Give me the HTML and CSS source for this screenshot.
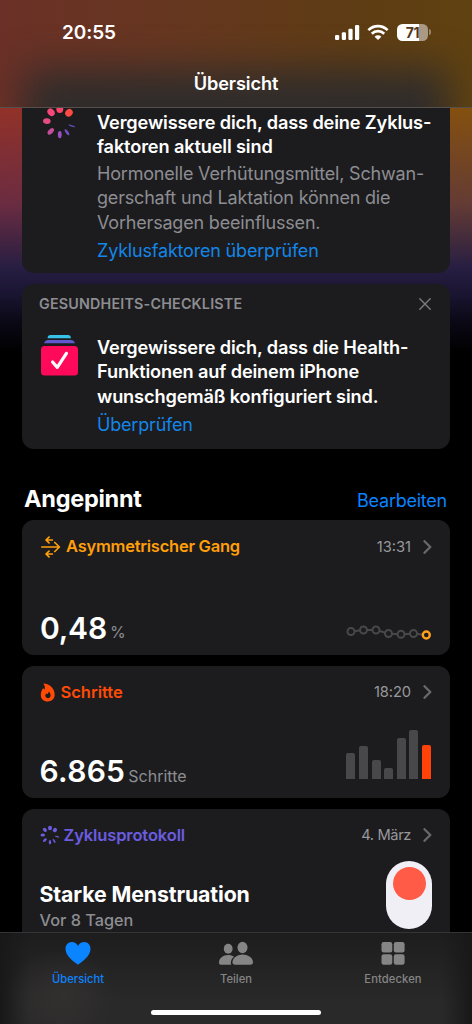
FILE: index.html
```html
<!DOCTYPE html>
<html lang="de">
<head>
<meta charset="utf-8">
<title>Übersicht</title>
<link rel="stylesheet" href="styles.css">
</head>
<body>
<div class="phone">
  <header class="header">
    <div class="status">
      <span class="clock">20:55</span>
      <div class="status-icons">
        <svg width="25" height="17" viewBox="0 0 25 17" fill="#fff"><rect x="0" y="11" width="4.2" height="5" rx="1.2"/><rect x="6.8" y="8.3" width="4.2" height="7.7" rx="1.2"/><rect x="13.4" y="4.7" width="4.2" height="11.3" rx="1.2"/><rect x="20" y="1" width="4.2" height="15" rx="1.2"/></svg>
        <svg class="wifi" width="22" height="17" viewBox="0 0 22 17" fill="none" stroke="#fff" stroke-width="2.7"><path d="M1.4 6.1a13.6 13.6 0 0 1 19.2 0"/><path d="M4.8 9.7a8.8 8.8 0 0 1 12.4 0"/><path d="M11 16l-3.4-3.3a4.8 4.8 0 0 1 6.8 0z" fill="#fff" stroke="none"/></svg>
        <div class="battery"><span class="battery-level">71</span></div><i class="battery-cap"></i>
      </div>
    </div>
    <h1 class="title">Übersicht</h1>
  </header>

  <main class="content">
    <section class="card notice cycle">
      <svg class="notice-icon" width="40" height="40" viewBox="-20.8 -20 40 40">
        <ellipse cx="0" cy="-12.7" rx="3.4" ry="3.6" fill="#fa4569"/>
        <ellipse cx="0" cy="-13" rx="3.5" ry="4" fill="#ff4944" transform="rotate(45)"/>
        <ellipse cx="0" cy="-12.6" rx=".7" ry="3.5" fill="#6550c8" transform="rotate(108)"/>
        <ellipse cx="0" cy="-12.5" rx="1.3" ry="3.6" fill="#7850c4" transform="rotate(145)"/>
        <ellipse cx="0" cy="-12.6" rx="1.9" ry="3.6" fill="#9c50be" transform="rotate(180)"/>
        <ellipse cx="0" cy="-13" rx="2.3" ry="3.9" fill="#c44e99" transform="rotate(224)"/>
        <ellipse cx="0" cy="-13" rx="2.9" ry="3.8" fill="#e64b83" transform="rotate(274)"/>
        <ellipse cx="0" cy="-13.1" rx="3.2" ry="4.1" fill="#f54779" transform="rotate(318)"/>
      </svg>
      <div class="notice-body">
        <h2 class="notice-title">Vergewissere dich, dass deine Zyklus-<br>faktoren aktuell sind</h2>
        <p class="notice-text">Hormonelle Verhütungsmittel, Schwan-<br>gerschaft und Laktation können die<br>Vorhersagen beeinflussen.</p>
        <a class="link">Zyklusfaktoren überprüfen</a>
      </div>
    </section>

    <section class="card checklist">
      <div class="label-row">
        <span class="label">GESUNDHEITS-CHECKLISTE</span>
        <svg width="12" height="12" viewBox="0 0 12 12" stroke="#7b7b7f" stroke-width="1.4" stroke-linecap="round"><path d="M.8.8l10.4 10.4M11.2.8L.8 11.2"/></svg>
      </div>
      <div class="notice">
        <svg class="notice-icon" width="40" height="42" viewBox="-1 0 40 42">
          <path d="M7.500 3.200Q7.800 0 10.500 0h17.500q2.600 0 3 3.200z" fill="#37c2ea"/>
          <path d="M4 8.300Q5.500 5 8 5h23q2.700 0 4 3.300z" fill="#6158cf"/>
          <rect x="1" y="11" width="37" height="29.500" rx="3.500" fill="#ff0a5b"/>
          <path d="M12.600 27l4.700 5.400 9.100-14" fill="none" stroke="#fff" stroke-width="3.200" stroke-linecap="round" stroke-linejoin="round"/>
        </svg>
        <div class="notice-body">
          <h2 class="notice-title">Vergewissere dich, dass die Health-<br>Funktionen auf deinem iPhone<br>wunschgemäß konfiguriert sind.</h2>
          <a class="link">Überprüfen</a>
        </div>
      </div>
    </section>

    <div class="section-head">
      <h2 class="section-title">Angepinnt</h2>
      <a class="edit">Bearbeiten</a>
    </div>

    <section class="card metric gait">
      <div class="metric-head">
        <svg class="gait-icon" width="20" height="22" viewBox="0 0 20 22" fill="none" stroke="#ff9f0a" stroke-width="1.700" stroke-linecap="round" stroke-linejoin="round"><path d="M.9 11h17.400M13.800 6.500l4.600 4.500-4.600 4.500M8 1.200L5 4l3 2.800M5.500 4h5.800M8 15.200L5 18l3 2.800M5.500 18h5.800"/></svg>
        <span class="name">Asymmetrischer Gang</span>
        <span class="time">13:31</span>
        <svg class="chevron" width="9" height="14" viewBox="0 0 9 14"><path d="M1.500 1.200L7.300 7l-5.800 5.800"/></svg>
      </div>
      <div class="metric-foot">
        <span class="value">0,48</span><span class="unit">%</span>
        <svg class="chart" width="86" height="16" viewBox="0 0 86 16" fill="#1c1c1e" stroke="#48484a" stroke-width="2"><path fill="none" d="M5 7.500L17.500 6 30 6l12.500 3.500L55 10.500 67.500 9.500 80 11"/><circle cx="5" cy="7.500" r="3.500"/><circle cx="17.500" cy="6" r="3.500"/><circle cx="30" cy="6" r="3.500"/><circle cx="42.500" cy="9.500" r="3.500"/><circle cx="55" cy="10.300" r="3.500"/><circle cx="67.500" cy="9.500" r="3.500"/><circle cx="80.300" cy="11" r="3.500" stroke="#ffa01e" stroke-width="2.400"/></svg>
      </div>
    </section>

    <section class="card metric steps">
      <div class="metric-head">
        <svg class="flame-icon" width="16" height="19" viewBox="0 0 16 19"><path fill="#ff4b05" fill-rule="evenodd" d="M3.200.6C8.500.4 14.700 5 14.700 11.600c0 4.200-2.800 6.900-7 6.900-4.100 0-6.900-2.700-6.900-6.600C.8 9.500 1.600 7.300 3 5.600c.8 0 1.200.4 1.700 1.100C5.300 4.300 4.600 2 3.200.6zM8.600 8.600c.2 1.300-.5 1.900-1.200 2.600-.4-.3-.6-.6-1.100-.8-.8.9-1.100 1.700-.9 2.700.3 1.300 1.300 2.100 2.600 2.100s2.600-1 2.600-2.500c0-1.700-.8-3.200-2-4.100z"/></svg>
        <span class="name">Schritte</span>
        <span class="time">18:20</span>
        <svg class="chevron" width="9" height="14" viewBox="0 0 9 14"><path d="M1.500 1.200L7.300 7l-5.800 5.800"/></svg>
      </div>
      <div class="metric-foot">
        <span class="value">6.865</span><span class="unit">Schritte</span>
        <div class="bars"><i style="height:26px"></i><i style="height:33px"></i><i style="height:19px"></i><i style="height:11px"></i><i style="height:41px"></i><i style="height:49px"></i><i class="today" style="height:34px"></i></div>
      </div>
    </section>

    <section class="card metric log">
      <div class="metric-head">
        <svg class="log-icon" width="20" height="20" viewBox="-20 -20 40 40" fill="#6b5ce0">
          <ellipse cy="-14" rx="4" ry="4.500"/><ellipse cy="-14" rx="4" ry="4.500" transform="rotate(45)"/><ellipse cy="-14.500" rx="1.200" ry="4.500" transform="rotate(103)"/><ellipse cy="-14.500" rx="1.700" ry="4.500" transform="rotate(145)"/><ellipse cy="-14.500" rx="2.300" ry="4.500" transform="rotate(180)"/><ellipse cy="-14.500" rx="2.700" ry="4.500" transform="rotate(225)"/><ellipse cy="-14.500" rx="3" ry="4.500" transform="rotate(270)"/><ellipse cy="-14.500" rx="3.500" ry="4.500" transform="rotate(315)"/>
        </svg>
        <span class="name">Zyklusprotokoll</span>
        <span class="time">4. März</span>
        <svg class="chevron" width="9" height="14" viewBox="0 0 9 14"><path d="M1.500 1.200L7.300 7l-5.800 5.800"/></svg>
      </div>
      <div class="log-body">
        <div class="log-text"><h3 class="log-title">Starke Menstruation</h3><p class="log-date">Vor 8 Tagen</p></div>
        <div class="capsule"><i class="dot"></i></div>
      </div>
    </section>
  </main>

  <footer class="footer">
    <nav class="tabs">
      <a class="tab active"><svg width="28" height="26" viewBox="0 0 28 26"><path d="M14 24.700C9 21.400 1.500 15.600 1.500 8.800 1.500 4.800 4.300 2 7.800 2c2.700 0 4.900 1.400 6.200 3.900C15.300 3.400 17.500 2 20.200 2c3.500 0 6.300 2.800 6.300 6.800 0 6.800-7.500 12.600-12.500 15.900z"/></svg><span>Übersicht</span></a>
      <a class="tab"><svg width="36" height="26" viewBox="0 0 36 26"><ellipse cx="10.200" cy="8.800" rx="4.400" ry="5"/><path d="M1 22.500c0-4 4-7.400 9.200-7.400 2.300 0 4.300.6 5.800 1.600-2 1.600-3.200 3.600-3.200 6.300 0 .7.200 1.200.5 1.700H3c-1.400 0-2-.7-2-2.200z"/><ellipse cx="24.500" cy="7.500" rx="5" ry="5.700"/><path d="M14.500 22.300c0-3.900 4.100-7.800 10.200-7.800s10.300 3.900 10.300 7.800c0 1.700-.9 2.400-2.500 2.400H17c-1.600 0-2.500-.7-2.500-2.400z"/></svg><span>Teilen</span></a>
      <a class="tab discover"><svg width="26" height="26" viewBox="0 0 26 26"><rect x="1.500" y="2" width="10.800" height="10.500" rx="2.200"/><rect x="13.800" y="2" width="10.800" height="10.500" rx="2.200"/><rect x="1.500" y="14.200" width="10.800" height="10.500" rx="2.200"/><rect x="13.800" y="14.200" width="10.800" height="10.500" rx="2.200"/></svg><span>Entdecken</span></a>
    </nav>
    <div class="home-bar"></div>
  </footer>
</div>
</body>
</html>
```
FILE: styles.css
```css
* { box-sizing: border-box; }
body { margin: 0; background: #000; color: #fff; font-family: Inter, "Liberation Sans", sans-serif; }
h1, h2, h3, p { margin: 0; }
svg { display: block; flex: none; }
.phone { width: 472px; height: 1024px; display: flex; flex-direction: column; overflow: hidden; }

.header {
  position: relative; isolation: isolate; overflow: hidden;
  height: 108px; flex: none; border-bottom: 1px solid #55504b;
  background: linear-gradient(90deg, #6b3027 0%, #65371f 40%, #5e3c14 75%, #604211 100%);
}
/* Soft shade of the cards scrolling beneath the bar */
.header::before {
  content: ""; position: absolute; z-index: -1; left: 24px; right: 24px; top: 70px; height: 90px;
  background: #2f2c2b; filter: blur(19px);
}
.status { height: 64px; padding: 0 41px 0 62px; display: flex; align-items: center; justify-content: space-between; }
.clock { font-size: 19px; font-weight: 600; letter-spacing: -.1px; }
.status-icons { display: flex; align-items: center; }
.wifi { margin-left: 7px; }
.battery { width: 31px; height: 17px; margin-left: 8px; border-radius: 5.500px; background: linear-gradient(90deg, #fff 71%, #aa9a84 71%); display: flex; justify-content: center; align-items: center; }
.battery-level { color: #51371b; font-size: 14px; font-weight: 700; line-height: 17px; letter-spacing: -.4px; }
.battery-cap { width: 2px; height: 6px; margin-left: 1px; border-radius: 0 3px 3px 0; background: #98846a; }
.title { height: 38px; line-height: 38px; text-align: center; font-size: 18.200px; font-weight: 600; letter-spacing: -.1px; }

.content {
  flex: 1; min-height: 0; overflow: hidden; padding: 0 22px;
  background:
    linear-gradient(180deg, #2b214800 0, #45275980 95px, #271e42 160px, #1a1532 185px, #0a0814 215px, #000 245px),
    linear-gradient(90deg, #923129 0, #8c3b24 40%, #84510e 100%);
}
.card { background: #1c1c1e; border-radius: 12px; }
.notice { display: flex; }
.notice-icon { margin-right: 18px; }
.cycle { height: 165px; padding: 2px 17px 0; border-radius: 0 0 12px 12px; }
.cycle .notice-icon { margin-top: -8px; }
.notice-title { font-size: 18.200px; font-weight: 600; line-height: 24.400px; letter-spacing: -.14px; white-space: nowrap; }
.notice-text { margin-top: 3px; color: #8d8d92; font-size: 18px; line-height: 24.400px; letter-spacing: -.19px; white-space: nowrap; }
.link { display: block; margin-top: 4px; color: #1486e8; font-size: 18px; line-height: 24.400px; letter-spacing: -.19px; white-space: nowrap; }
.checklist .link { margin-top: 5px; }
.checklist { height: 165px; margin-top: 11px; padding: 10px 17px 0; }
.label-row { height: 20px; padding-right: 2px; display: flex; align-items: center; justify-content: space-between; }
.label { color: #8d8d92; font-size: 14.300px; font-weight: 600; letter-spacing: .2px; padding-bottom: 1px; }
.checklist .notice { margin-top: 21px; }

.section-head { height: 71px; padding: 33px 3px 0 2px; display: flex; justify-content: space-between; }
.section-title { font-size: 23.500px; font-weight: 700; line-height: 34px; letter-spacing: -.27px; }
.edit { color: #0a84ff; font-size: 18px; line-height: 37px; letter-spacing: -.24px; }

.metric { padding: 0 18px 0 17px; display: flex; flex-direction: column; }
.gait { height: 135px; }
.steps { height: 132px; margin-top: 11px; }
.log { height: 180px; margin-top: 11px; }
.metric-head { height: 53px; display: flex; align-items: center; }
.steps .metric-head, .log .metric-head { height: 52px; }
.gait-icon { margin: 0 5px 0 2px; }
.flame-icon { margin: 0 4.500px 0 1px; }
.log-icon { margin: 0 3.500px 0 1px; }
.name { font-size: 16.500px; font-weight: 600; }
.gait .name { color: #ff9f0a; letter-spacing: -.24px; padding-bottom: 1px; }
.steps .name { color: #ff4b05; }
.log .name { color: #6b5ce0; letter-spacing: -.12px; }
.time { margin-left: auto; color: #98989d; font-size: 14.700px; }
.steps .time { letter-spacing: -.1px; }
.log .time { letter-spacing: -.4px; }
.chevron { margin-left: 12px; fill: none; stroke: #68686c; stroke-width: 2.300; stroke-linecap: round; stroke-linejoin: round; }
.metric-foot { flex: 1; display: flex; align-items: flex-end; padding-bottom: 9px; }
.value { font-size: 30px; font-weight: 600; line-height: 36px; letter-spacing: .3px; }
.gait .value { letter-spacing: -.2px; margin-left: 1px; }
.unit { margin-left: 3px; color: #8d8d92; font-size: 16px; line-height: 27px; }
.steps .value { margin-left: .5px; }
.steps .unit { line-height: 26px; }
.chart { margin: 0 0 6px auto; }
.bars { margin: 0 1px 10px auto; display: flex; align-items: flex-end; gap: 3.600px; }
.bars i { width: 9px; border-radius: 2px 2px 0 0; background: #48484a; }
.bars .today { background: #ff4208; }
.log-body { display: flex; justify-content: space-between; }
.log-text { padding-left: .5px; }
.log-title { margin-top: 19px; font-size: 21.300px; font-weight: 700; line-height: 28px; letter-spacing: -.12px; }
.log-date { margin-top: 1px; color: #8d8d92; font-size: 16.300px; font-weight: 500; line-height: 22px; }
.capsule { width: 46px; height: 68px; border-radius: 23px; background: #efeff5; padding-top: 6px; }
.dot { display: block; width: 33px; height: 33px; margin: 0 auto; border-radius: 50%; background: #ff5b46; }

.footer { height: 92px; flex: none; border-top: 1px solid #343435; background: radial-gradient(ellipse 55px 50px at 62px 65px, #332f2f, #332f2f00), linear-gradient(90deg, #181818 0, #18181800 30px calc(100% - 30px), #181818 100%), linear-gradient(180deg, #1d1d1e, #292929 75%); }
.tabs { height: 77px; padding-top: 7px; display: grid; grid-template-columns: 156px 160px 154px; }
.tab { display: flex; flex-direction: column; align-items: center; color: #858585; font-size: 11.200px; font-weight: 500; line-height: 16px; }
.tab svg { fill: currentColor; }
.tab span { margin-top: 5px; }
.discover span { letter-spacing: .1px; }
.active { color: #0a84ff; }
.home-bar { width: 170px; height: 5px; margin: 0 auto; border-radius: 3px; background: #fff; }
```
